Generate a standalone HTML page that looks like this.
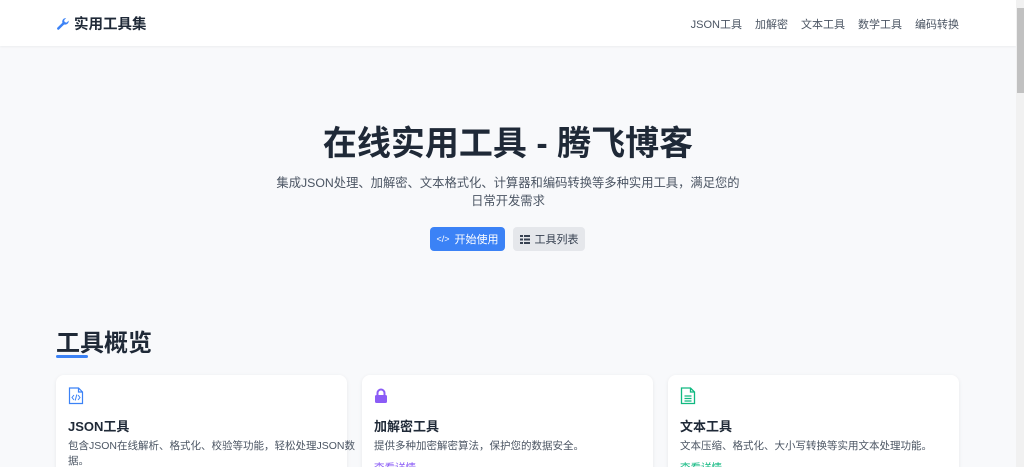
<!DOCTYPE html>
<html><head><meta charset="utf-8"><style>
*{margin:0;padding:0;box-sizing:border-box}
html,body{width:1024px;height:467px;overflow:hidden}
body{background:#f8f9fb;font-family:"Liberation Sans","Noto Sans CJK SC",sans-serif;color:#1f2937;position:relative}
.nav{position:absolute;left:0;top:0;width:1016px;height:46px;background:#fff;box-shadow:0 1px 2px rgba(0,0,0,.05)}
.logo{position:absolute;left:56px;top:13px;font-size:14.5px;font-weight:bold;color:#1f2937;display:flex;align-items:center;gap:4px}
.links{position:absolute;right:57px;top:16px;font-size:11px;color:#4b5563;display:flex;gap:13px}
.sb{position:absolute;right:0;top:0;width:8px;height:467px;background:#f1f1f1}
.sb div{position:absolute;left:1px;top:8px;width:7px;height:85px;background:#c1c1c1}
h1{position:absolute;left:0;width:1016px;top:116px;text-align:center;font-size:34px;font-weight:bold;color:#1f2937}
.sub{position:absolute;left:208px;width:600px;top:174px;text-align:center;font-size:12.3px;line-height:18px;color:#4b5563;white-space:nowrap}
.btn{position:absolute;top:227px;height:24px;border-radius:4px;font-size:11px;display:flex;align-items:center;justify-content:center;gap:5px}
.b1{left:430px;width:75px;background:#3b82f6;color:#fff}
.b2{left:513px;width:72px;background:#e5e7eb;color:#374151}
h2{position:absolute;left:56px;top:323px;font-size:24px;font-weight:bold;color:#1f2937}
.ul{position:absolute;left:56px;top:355px;width:32px;height:3px;background:#3b82f6;border-radius:2px}
.card{position:absolute;top:375px;width:291px;height:110px;background:#fff;border-radius:8px;box-shadow:0 1px 4px rgba(0,0,0,.07);padding:12px}
.card h3{font-size:13px;font-weight:bold;margin-top:6px;color:#1f2937}
.card p{font-size:10.5px;line-height:15px;color:#4b5563;margin-top:4px;margin-right:-20px}
.card a{font-size:10.5px;display:block;margin-top:6px}
</style></head><body>
<div class="nav">
 <div class="logo"><svg width="14" height="14" viewBox="0 0 16 16"><path d="M14.5 4.2a4 4 0 0 1-5.2 4.3L3.6 14.2a1.4 1.4 0 0 1-2-2l5.7-5.7A4 4 0 0 1 11.6 1.3L9.3 3.6l.6 2.2 2.2.6z" fill="#3b82f6"/></svg>实用工具集</div>
 <div class="links"><span>JSON工具</span><span>加解密</span><span>文本工具</span><span>数学工具</span><span>编码转换</span></div>
</div>
<div class="sb"><div></div></div>
<h1>在线实用工具 - 腾飞博客</h1>
<div class="sub">集成JSON处理、加解密、文本格式化、计算器和编码转换等多种实用工具，满足您的<br>日常开发需求</div>
<div class="btn b1"><span style="font-size:9px">&lt;/&gt;</span>开始使用</div>
<div class="btn b2"><svg width="10" height="9" viewBox="0 0 10 9"><rect x="0" y="0" width="3" height="2" fill="#374151"/><rect x="4" y="0" width="6" height="2" fill="#374151"/><rect x="0" y="3.5" width="3" height="2" fill="#374151"/><rect x="4" y="3.5" width="6" height="2" fill="#374151"/><rect x="0" y="7" width="3" height="2" fill="#374151"/><rect x="4" y="7" width="6" height="2" fill="#374151"/></svg>工具列表</div>
<h2>工具概览</h2><div class="ul"></div>
<div class="card" style="left:56px"><svg width="16" height="18" viewBox="0 0 16 18"><path d="M1.5 1h9l4 4v11.5h-13z M10.5 1v4h4" fill="none" stroke="#3b82f6" stroke-width="1.2"/><path d="M6 8l-2 2.5 2 2.5M10 8l2 2.5-2 2.5M8.8 7.5l-1.6 6" fill="none" stroke="#3b82f6" stroke-width="1"/></svg><h3>JSON工具</h3><p>包含JSON在线解析、格式化、校验等功能，轻松处理JSON数据。</p></div>
<div class="card" style="left:362px"><svg width="14" height="18" viewBox="0 0 14 16"><path d="M3.5 7V5a3.5 3.5 0 0 1 7 0v2" fill="none" stroke="#8b5cf6" stroke-width="2"/><rect x="1" y="7" width="12" height="8" rx="1.5" fill="#8b5cf6"/></svg><h3>加解密工具</h3><p>提供多种加密解密算法，保护您的数据安全。</p><a style="color:#8b5cf6">查看详情 →</a></div>
<div class="card" style="left:668px"><svg width="16" height="18" viewBox="0 0 16 18"><path d="M1.5 1h9l4 4v11.5h-13z M10.5 1v4h4" fill="none" stroke="#10b981" stroke-width="1.3"/><path d="M4.5 9h7M4.5 11.5h7M4.5 14h7" stroke="#10b981" stroke-width="1.2"/></svg><h3>文本工具</h3><p>文本压缩、格式化、大小写转换等实用文本处理功能。</p><a style="color:#10b981">查看详情 →</a></div>
</body></html>
